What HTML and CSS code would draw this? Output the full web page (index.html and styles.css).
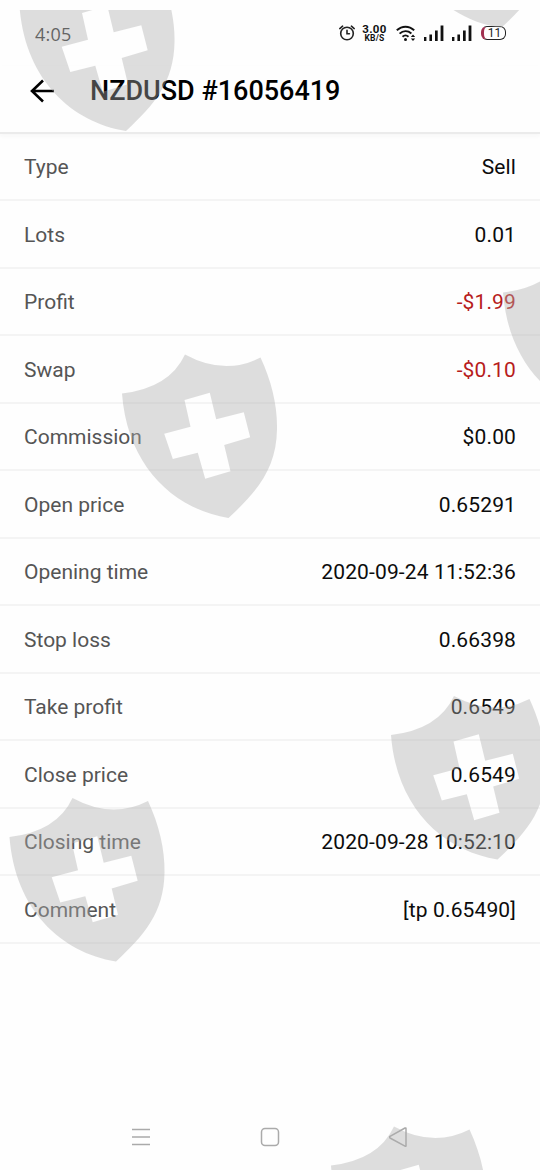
FILE: index.html
```html
<!DOCTYPE html>
<html lang="en">
<head>
    <meta charset="UTF-8">
    <meta name="viewport" content="width=device-width, initial-scale=1.0">
    <title>NZDUSD #16056419</title>
    <link rel="stylesheet" href="styles.css">
</head>
<body>
    <div class="screen">
        <div class="status-bar">
            <span class="clock">4:05</span>
            <div class="status-icons">
                <svg class="alarm" width="18" height="18" viewBox="0 0 18 18" fill="none" stroke="#222" stroke-width="1.6" stroke-linecap="round">
                    <circle cx="9" cy="9.5" r="6.3"/>
                    <path d="M9 6.4v3.4h2.4M1.8 4.6l2.8-2.4M16.2 4.6l-2.8-2.4"/>
                </svg>
                <div class="speed"><b>3.00</b><span>KB/S</span></div>
                <svg class="wifi" width="20" height="17" viewBox="0 0 20 17" fill="none" stroke="#111" stroke-width="1.9">
                    <path d="M.8 5.3C6 .5 13 .5 18.2 5.3M3.6 8.6c3.5-3.1 8.3-3.1 11.8-.2M6.5 11.7c1.8-1.6 4.2-1.6 6 0"/>
                    <circle cx="9.5" cy="14.6" r="1.5" fill="#111" stroke="none"/>
                    <path d="M14.8 12l2.2-2.6 2.2 2.6zM14.8 13.4l2.2 2.6 2.2-2.6z" fill="#111" stroke="none"/>
                </svg>
                <svg class="signal" width="20" height="16" viewBox="0 0 20 16" fill="#111">
                    <path d="M0 12h2.4v4H0zM5.4 9.6h2.6V16H5.4zM11 5.4h2.7V16H11zM16.6.4h2.8V16h-2.8z"/>
                </svg>
                <svg class="signal" width="20" height="16" viewBox="0 0 20 16" fill="#111">
                    <path d="M0 12h2.4v4H0zM5.4 9.6h2.6V16H5.4zM11 5.4h2.7V16H11zM16.6.4h2.8V16h-2.8z"/>
                </svg>
                <div class="battery">11</div>
            </div>
        </div>

        <div class="header">
            <svg class="back" width="26" height="24" viewBox="0 0 26 24" fill="none" stroke="#000" stroke-width="2.6">
                <path d="M25 12H3M14 1.5L3 12l11 10.5"/>
            </svg>
            <h1>NZDUSD #16056419</h1>
        </div>

        <div class="details">
            <div class="row"><span class="label">Type</span><span class="value">Sell</span></div>
            <div class="row"><span class="label">Lots</span><span class="value">0.01</span></div>
            <div class="row"><span class="label">Profit</span><span class="value loss">-$1.99</span></div>
            <div class="row"><span class="label">Swap</span><span class="value loss">-$0.10</span></div>
            <div class="row"><span class="label">Commission</span><span class="value">$0.00</span></div>
            <div class="row"><span class="label">Open price</span><span class="value">0.65291</span></div>
            <div class="row"><span class="label">Opening time</span><span class="value">2020-09-24 11:52:36</span></div>
            <div class="row"><span class="label">Stop loss</span><span class="value">0.66398</span></div>
            <div class="row"><span class="label">Take profit</span><span class="value">0.6549</span></div>
            <div class="row"><span class="label">Close price</span><span class="value">0.6549</span></div>
            <div class="row"><span class="label">Closing time</span><span class="value">2020-09-28 10:52:10</span></div>
            <div class="row"><span class="label">Comment</span><span class="value">[tp 0.65490]</span></div>
        </div>

        <div class="nav-bar">
            <svg width="20" height="20" viewBox="0 0 20 20" fill="none" stroke="#aaa" stroke-width="1.3">
                <path d="M1 2.5h18M1 10h18M1 17.5h18"/>
            </svg>
            <svg width="20" height="20" viewBox="0 0 20 20" fill="none" stroke="#aaa" stroke-width="1.5">
                <rect x="1.5" y="1.5" width="17" height="17" rx="3.5"/>
            </svg>
            <svg width="20" height="20" viewBox="0 0 20 20" fill="none" stroke="#aaa" stroke-width="1.5" stroke-linejoin="round">
                <path d="M17 1.6v17.2q0 1-1 .4L1 11q-1.2-.8 0-1.6L16 1q1-.4 1 .6z"/>
            </svg>
        </div>

        <!-- watermark over the whole screen -->
        <svg class="watermark" width="540" height="1160" viewBox="0 10 540 1160">
            <defs>
                <path id="shield" fill-rule="evenodd" d="M.5 39.5Q48 34 63.5.5Q103 22 139 3.5C150 27 156 52 155.5 75C155 115 135 138 107 164C52 155 6 112 .5 39.5ZM63 46L88.3 38.7L94.7 65.3L122.3 58.3L128.7 83.3L102.7 91L109 117.3L83.7 124.7L76.3 98.7L51.3 105L42.7 79.7L69 72.7Z"/>
            </defs>
            <use href="#shield" x="19" y="-33"/>
            <use href="#shield" x="394" y="-136"/>
            <use href="#shield" x="502.5" y="253"/>
            <use href="#shield" x="121.5" y="354"/>
            <use href="#shield" x="390.5" y="695.5"/>
            <use href="#shield" x="9" y="797.5"/>
            <use href="#shield" x="330.5" y="1126"/>
        </svg>
    </div>
</body>
</html>
```

FILE: styles.css
```css
* {
    box-sizing: border-box;
}
body {
    margin: 0;
    font-family: Roboto, Arial, sans-serif;
    background-color: #fefefe;
}
.screen {
    position: relative;
    display: flex;
    flex-direction: column;
    width: 540px;
    height: 1170px;
    overflow: hidden;
}
.status-bar {
    display: flex;
    justify-content: space-between;
    align-items: center;
    height: 66px;
    padding: 0 34px 0 35px;
}
.clock {
    padding-top: 2px;
    font-family: "Open Sans", sans-serif;
    font-size: 18px;
    color: #333;
    letter-spacing: 0.2px;
}
.status-icons {
    display: flex;
    align-items: center;
}
.speed {
    display: flex;
    flex-direction: column;
    align-items: center;
    width: 25px;
    margin: 0 9px 0 6px;
    line-height: 9px;
    color: #111;
}
.speed b {
    font-size: 11.5px;
    line-height: 10px;
    letter-spacing: 0.3px;
}
.speed span {
    font-size: 8.5px;
    font-weight: 700;
    letter-spacing: 0.2px;
}
.signal {
    margin-left: 8px;
}
.battery {
    width: 25px;
    height: 14px;
    margin-left: 9px;
    border: 1.5px solid #222;
    border-left: 3px solid #a03050;
    border-radius: 6px;
    font-size: 12px;
    line-height: 12px;
    text-align: center;
    color: #222;
}
.header {
    display: flex;
    align-items: center;
    height: 67.5px;
    padding: 0 0 16px 29px;
    border-bottom: 2px solid #ebebeb;
    box-shadow: 0 2px 4px #f6f6f6;
}
h1 {
    margin: 0 0 0 35px;
    font-size: 27px;
    line-height: 32px;
    font-weight: 500;
    color: #000;
}
.row {
    display: flex;
    justify-content: space-between;
    align-items: center;
    height: 67.5px;
    padding: 2px 24px 0;
    border-bottom: 2px solid #f4f4f4;
    font-size: 21px;
}
.label {
    color: #555;
}
.value {
    color: #0c0c0c;
    letter-spacing: 0.13px;
}
.loss {
    color: #b71c1c;
}
.nav-bar {
    display: flex;
    justify-content: space-between;
    width: 278px;
    margin: auto auto 23px;
}
/* the shields sit on top of the text and tint it */
.watermark {
    position: absolute;
    left: 0;
    top: 10px;
    fill: #adadad;
    opacity: 0.4;
    pointer-events: none;
}
```
